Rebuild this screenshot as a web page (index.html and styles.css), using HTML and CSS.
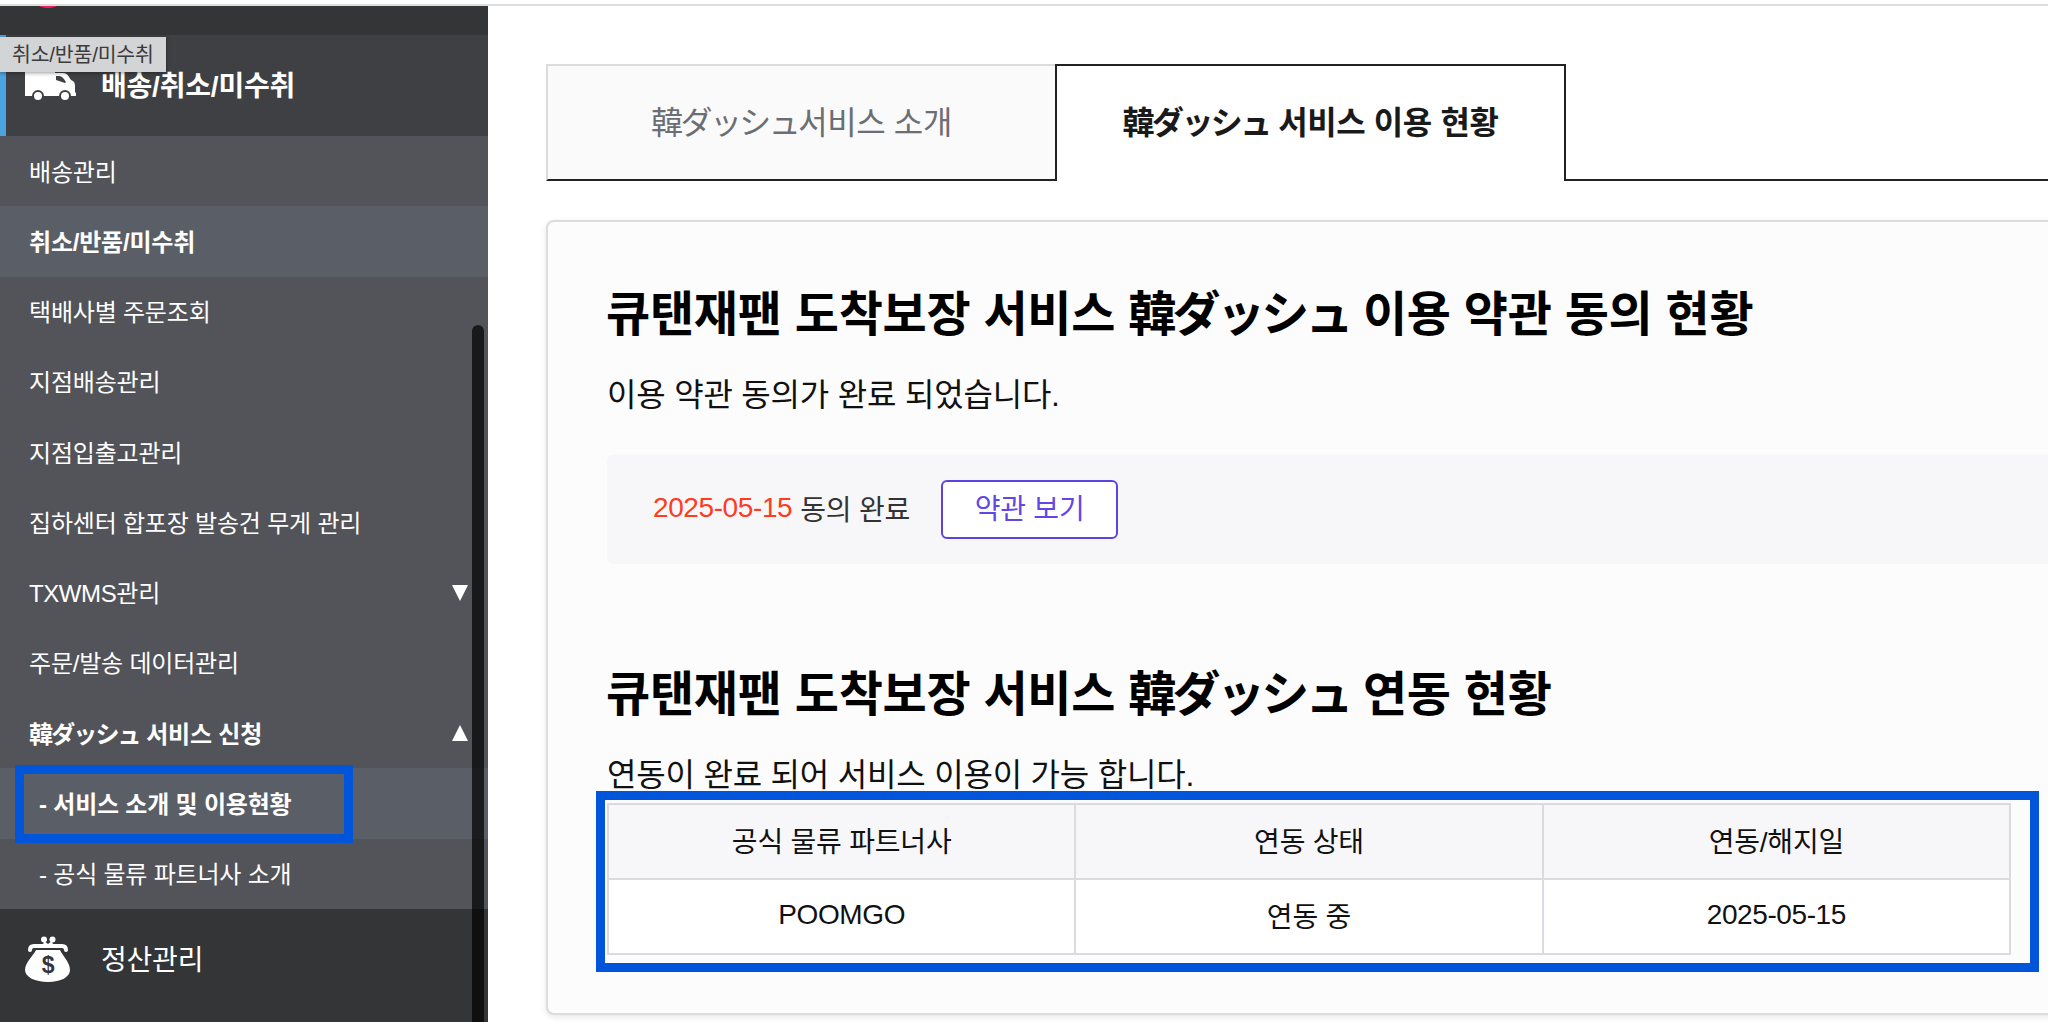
FILE: index.html
```html
<!DOCTYPE html>
<html lang="ko">
<head>
    <meta charset="UTF-8" />
    <meta name="viewport" content="width=device-width, initial-scale=1.0" />
    <title>韓ダッシュ 서비스 이용 현황</title>
    <link rel="stylesheet" href="styles.css">
</head>
<body>

<!-- 왼쪽 메뉴 -->
<div class="sidebar">
    <div class="menu-prev"><span class="prev-icon"></span></div>
    <div class="menu-title active">
        <svg class="menu-icon" width="52" height="44" viewBox="0 0 52 44">
            <path fill="#fff" d="M0 2h30v7h8c3 0 4 1 6 4l2 3c3 1 4 3 4 6v6l1 1v3H0z"/>
            <path fill="#3f4043" d="M31 12h3c3 0 5 3 7 6l-1 1-9-3z"/>
            <circle cx="13" cy="32" r="5" fill="#fff" stroke="#3f4043" stroke-width="2"/>
            <circle cx="40" cy="32" r="5" fill="#fff" stroke="#3f4043" stroke-width="2"/>
        </svg>
        <span>배송/취소/미수취</span>
    </div>
    <ul class="submenu">
        <li>배송관리</li>
        <li class="on">취소/반품/미수취</li>
        <li>택배사별 주문조회</li>
        <li>지점배송관리</li>
        <li>지점입출고관리</li>
        <li>집하센터 합포장 발송건 무게 관리</li>
        <li><span><span class="en">TXWMS</span>관리</span> <i class="arrow down"></i></li>
        <li>주문/발송 데이터관리</li>
        <li class="open"><span><span class="ja">韓ダッシュ</span> 서비스 신청</span> <i class="arrow up"></i></li>
        <li class="depth on">- 서비스 소개 및 이용현황<span class="mark mark-menu"></span></li>
        <li class="depth">- 공식 물류 파트너사 소개</li>
    </ul>
    <div class="menu-title">
        <svg class="menu-icon" width="46" height="46" viewBox="0 0 46 46">
            <circle cx="19" cy="3.500" r="3" fill="#fff"/>
            <circle cx="27.500" cy="3.500" r="3" fill="#fff"/>
            <path fill="#fff" d="M19 5l4 3 4-3 1 4H18z"/>
            <path fill="none" stroke="#fff" stroke-width="4" stroke-linecap="round" d="M5 14q0-4 4-4h28q4 0 4 4"/>
            <path fill="#fff" d="M11 14h24c2 5 10 12 10 20 0 7-9 12-22 12S0 41 0 34c0-8 9-15 11-20z"/>
            <text class="coin" x="23" y="37">$</text>
        </svg>
        <span>정산관리</span>
    </div>
    <div class="scroll-thumb"></div>
    <div class="tooltip">취소/반품/미수취</div>
</div>

<div class="content">
    <div class="tabs">
        <div class="tab"><span class="ja">韓ダッシュ</span>서비스 소개</div>
        <div class="tab selected"><span class="ja">韓ダッシュ</span> 서비스 이용 현황</div>
        <div class="tab-rest"></div>
    </div>

    <div class="card">
        <h2>큐탠재팬 도착보장 서비스 <span class="ja">韓ダッシュ</span> 이용 약관 동의 현황</h2>
        <p>이용 약관 동의가 완료 되었습니다.</p>
        <div class="agree-box">
            <span class="date en">2025-05-15</span><span class="agree-text">동의 완료</span>
            <button type="button">약관 보기</button>
        </div>

        <h2>큐탠재팬 도착보장 서비스 <span class="ja">韓ダッシュ</span> 연동 현황</h2>
        <p>연동이 완료 되어 서비스 이용이 가능 합니다.</p>
        <div class="table-wrap">
            <table>
                <tr>
                    <th>공식 물류 파트너사</th>
                    <th>연동 상태</th>
                    <th>연동/해지일</th>
                </tr>
                <tr>
                    <td class="en">POOMGO</td>
                    <td>연동 중</td>
                    <td class="en">2025-05-15</td>
                </tr>
            </table>
            <span class="mark mark-table"></span>
        </div>
    </div>
</div>

</body>
</html>
```

FILE: styles.css
```css
* {
    box-sizing: border-box;
}

body {
    margin: 0;
    height: 1022px;
    display: flex;
    overflow: hidden;
    padding-top: 6px;
    font-family: "Liberation Sans", "Noto Sans CJK KR", sans-serif;
    letter-spacing: -0.2px;
    color: #111;
    background-color: #fff;
    background-image: linear-gradient(#dcdedd, #dcdedd);
    background-size: 100% 2px;
    background-position: 0 4px;
    background-repeat: no-repeat;
}

.ja {
    letter-spacing: -0.077em;
}

.en {
    letter-spacing: -0.4px;
}

/* 왼쪽 메뉴 */
.sidebar {
    position: relative;
    flex: none;
    width: 488px;
    height: 1016px;
    background-color: #343537;
    color: #fff;
    overflow: hidden;
}

.menu-prev {
    height: 29px;
    padding-left: 28px;
    overflow: hidden;
}

.prev-icon {
    display: block;
    width: 40px;
    height: 40px;
    margin-top: -38px;
    border-radius: 50%;
    background-color: #f0215c;
}

.menu-title {
    display: flex;
    align-items: center;
    height: 101px;
    padding-left: 25px;
    font-size: 28px;
}

.menu-title span {
    padding-top: 4px;
    line-height: 40px;
}

.menu-title.active {
    background-color: #3f4043;
    border-left: 6px solid #4ba3e0;
    padding-left: 19px;
    font-weight: bold;
}

.menu-title.active span {
    padding-top: 2px;
}

.menu-icon {
    flex: none;
    margin-right: 30px;
}

.active .menu-icon {
    margin-right: 24px;
}

.coin {
    font-size: 23px;
    font-weight: bold;
    text-anchor: middle;
    fill: #343537;
}

.submenu {
    list-style: none;
    margin: 0;
    padding: 0;
    background-color: #535459;
}

.submenu li {
    position: relative;
    display: flex;
    align-items: center;
    justify-content: space-between;
    height: 70.27px;
    padding: 0 20px 2px 29px;
    font-size: 24px;
}

.submenu li.on {
    background-color: #5a5e67;
    font-weight: bold;
}

.submenu li.open {
    font-weight: bold;
}

.submenu li.depth {
    padding-left: 39px;
}

.arrow {
    margin-top: 2px;
    border-left: 8px solid transparent;
    border-right: 8px solid transparent;
}

.arrow.down {
    border-top: 16px solid #fff;
}

.arrow.up {
    border-bottom: 16px solid #fff;
}

.scroll-thumb {
    position: absolute;
    right: 4px;
    top: 319px;
    bottom: 0;
    width: 12px;
    border-radius: 6px 6px 0 0;
    background-color: rgba(0, 0, 0, 0.7);
}

.tooltip {
    position: absolute;
    left: 0;
    top: 31px;
    width: 166px;
    height: 35px;
    padding-left: 12px;
    line-height: 36px;
    font-size: 20.5px;
    color: #3c3c3c;
    background-color: #d3d4d6;
    box-shadow: 0 1px 4px rgba(0, 0, 0, 0.4);
    white-space: nowrap;
}

/* 강조 테두리 */
.mark {
    position: absolute;
    border: 9px solid #0055db;
}

.mark-menu {
    left: 15px;
    top: -3px;
    width: 338px;
    height: 78px;
}

.mark-table {
    left: -11px;
    top: -12px;
    width: 1443px;
    height: 181px;
}

/* 본문 */
.content {
    flex: 1;
    min-width: 0;
    padding: 58px 0 0 58px;
}

.tabs {
    display: flex;
    height: 117px;
}

.tab {
    width: 509px;
    line-height: 115px;
    text-align: center;
    font-size: 32px;
    letter-spacing: -0.4px;
    color: #6c6e75;
    background-color: #fafafa;
    border: 2px solid #dcdcdc;
    border-right: none;
    border-bottom: 2px solid #222;
}

.tab .ja {
    letter-spacing: -0.08em;
}

.tab.selected {
    width: 511px;
    font-weight: bold;
    color: #1a1a1a;
    background-color: #fff;
    border: 2px solid #222;
    border-bottom: none;
}

.tab-rest {
    flex: 1;
    border-bottom: 2px solid #222;
}

.card {
    width: 1560px;
    height: 795px;
    margin-top: 39px;
    padding: 60px 0 0 59px;
    border: 2px solid #dcdcdc;
    border-radius: 8px;
    background-color: #fcfcfc;
    box-shadow: 0 2px 6px rgba(0, 0, 0, 0.1);
}

h2 {
    margin: 0 0 0 -1px;
    font-size: 48px;
    line-height: 66px;
    letter-spacing: -0.25px;
    color: #000;
}

p {
    margin: 23px 0 0;
    font-size: 32px;
    line-height: 48px;
}

.agree-box {
    display: flex;
    align-items: center;
    height: 109px;
    margin: 36px 0 98px;
    padding-left: 46px;
    border-radius: 6px;
    background-color: #f7f7fa;
    font-size: 28px;
}

.date {
    color: #ff3b22;
    margin-right: 8px;
    padding-bottom: 4px;
}

.agree-text {
    color: #333;
    margin-right: 31px;
    padding-bottom: 4px;
}

button {
    width: 177px;
    height: 59px;
    padding: 0 0 5px;
    border: 2px solid #5f43e0;
    border-radius: 6px;
    background-color: #fff;
    color: #6347e6;
    font-family: inherit;
    font-size: 28px;
    letter-spacing: inherit;
}

.table-wrap {
    position: relative;
    width: 1404px;
    margin-top: 4px;
}

table {
    width: 100%;
    border-collapse: collapse;
    table-layout: fixed;
    font-size: 28px;
    text-align: center;
    background-color: #fff;
}

th, td {
    height: 75px;
    padding: 0 0 4px;
    border: 2px solid #dadae1;
    font-weight: normal;
}

th {
    background-color: #f7f7fa;
}
```
